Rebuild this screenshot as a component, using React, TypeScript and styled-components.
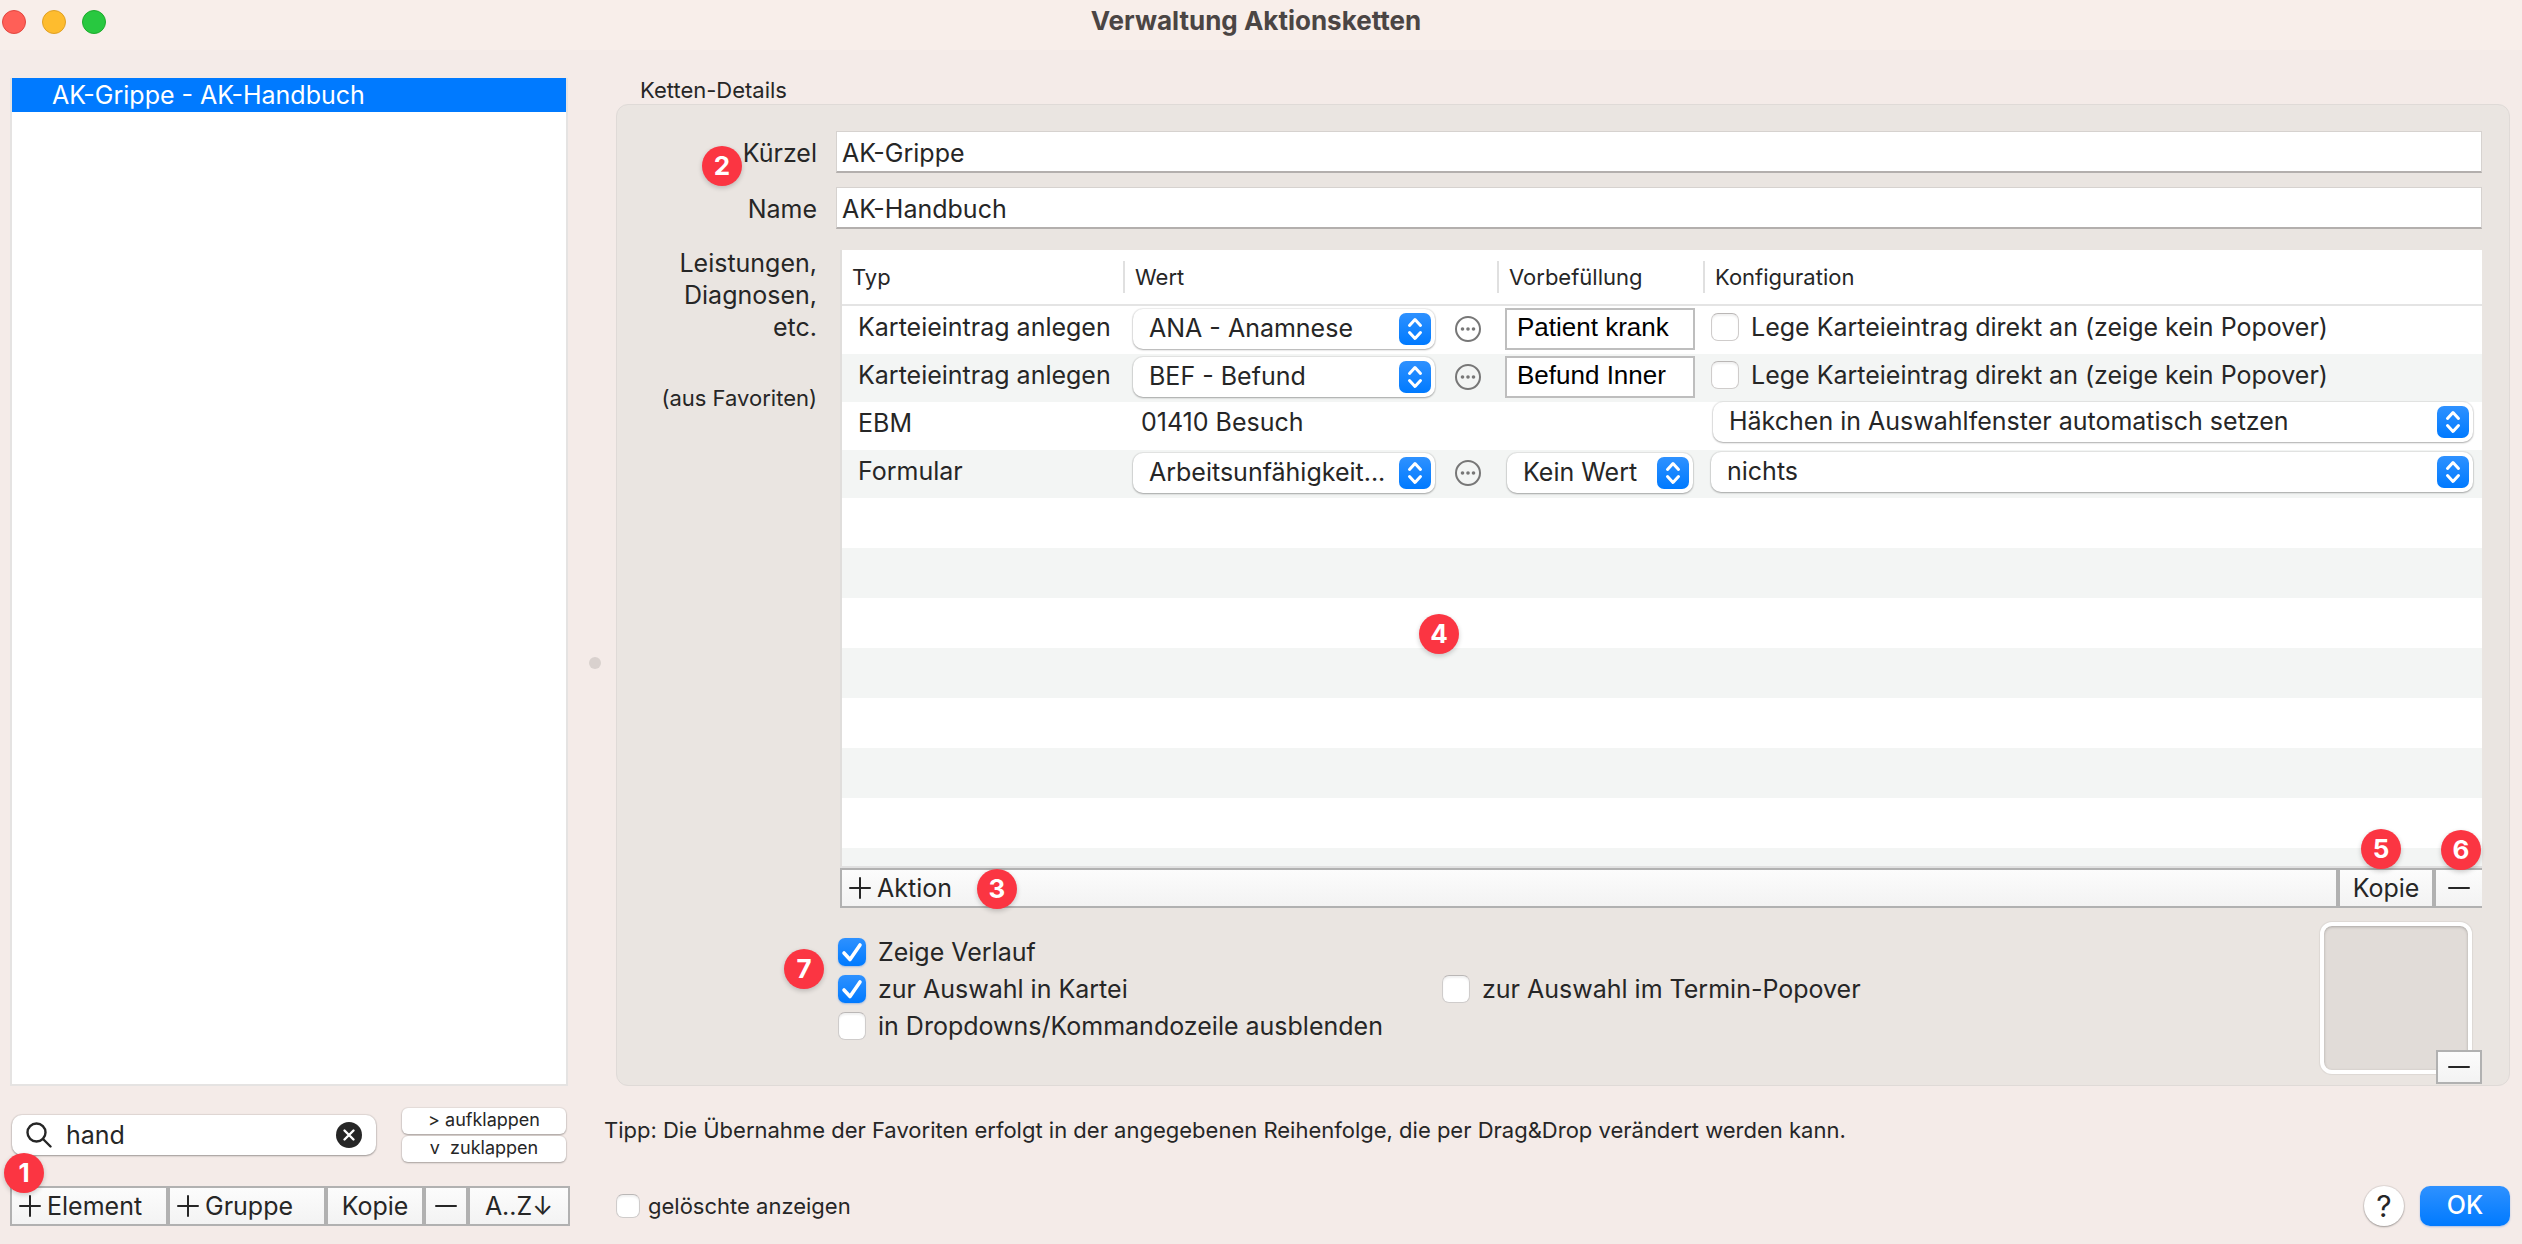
import React from 'react';
import styled, { createGlobalStyle, css } from 'styled-components';

const GlobalStyle = createGlobalStyle`
  *, *::before, *::after { box-sizing: border-box; }
  body { margin: 0; background: #f4ebe8; }
  body, button, input, select {
    font-family: Inter, "Liberation Sans", sans-serif;
    font-size: 25px;
    color: #262626;
  }
`;

const Window = styled.div`
  display: flex;
  flex-direction: column;
  min-height: 100vh;
  background: #f4ebe8;
`;

const TitleBar = styled.header`
  display: grid;
  grid-template-columns: 1fr auto 1fr;
  align-items: center;
  height: 50px;
  padding: 0 12px 6px 2px;
  background: #f8eeea;
`;

const Lights = styled.div`
  display: flex;
  gap: 16px;
`;

const Light = styled.button<{ $fill: string; $edge: string }>`
  width: 24px;
  height: 24px;
  padding: 0;
  border: 1px solid ${(p) => p.$edge};
  border-radius: 50%;
  background: ${(p) => p.$fill};
`;

const Title = styled.h1`
  margin: 0;
  padding-bottom: 2px;
  font-size: 26px;
  font-weight: 700;
  line-height: 32px;
  color: #4b4544;
`;

const Body = styled.div`
  display: flex;
  flex: 1;
  padding: 0 12px 18px 10px;
`;

const Sidebar = styled.aside`
  display: flex;
  flex-direction: column;
  flex: none;
  width: 560px;
  padding-top: 28px;
`;

const ChainList = styled.ul`
  flex: 1;
  margin: 0 2px 0 0;
  padding: 0;
  list-style: none;
  background: #fff;
  border: 2px solid #e5e3e2;
  border-top: 0;
`;

const ChainItem = styled.li`
  height: 34px;
  padding-left: 40px;
  line-height: 34px;
  color: #fff;
  background: #007aff;
`;

const SearchRow = styled.div`
  display: flex;
  justify-content: space-between;
  align-items: center;
  margin: 22px 4px 24px 2px;
`;

const SearchBox = styled.div`
  display: flex;
  align-items: center;
  gap: 14px;
  width: 364px;
  height: 40px;
  padding: 0 14px;
  border-radius: 10px;
  background: #fff;
  box-shadow: 0 0 1px 1px rgba(0, 0, 0, 0.08), 0 1px 2px rgba(0, 0, 0, 0.3);
`;

const SearchInput = styled.input`
  flex: 1;
  min-width: 0;
  height: 32px;
  padding: 0;
  border: 0;
  outline: 0;
  background: none;
`;

const IconButton = styled.button`
  display: flex;
  padding: 0;
  border: 0;
  background: none;
`;

const FoldButtons = styled.div`
  display: flex;
  flex-direction: column;
  gap: 2px;
  width: 164px;
`;

const FoldButton = styled.button`
  height: 26px;
  padding: 0 0 2px;
  border: 0;
  border-radius: 6px;
  background: #fff;
  font-size: 18px;
  line-height: 24px;
  white-space: pre;
  box-shadow: 0 0 1px 1px rgba(0, 0, 0, 0.06), 0 1px 2px rgba(0, 0, 0, 0.28);
`;

const ButtonBar = styled.div`
  position: relative;
  display: flex;
  height: 40px;
`;

const BarButton = styled.button<{ $width?: number; $start?: boolean; $open?: boolean }>`
  display: flex;
  align-items: center;
  justify-content: ${(p) => (p.$start ? 'flex-start' : 'center')};
  gap: 6px;
  ${(p) => (p.$width ? css`flex: 0 0 ${p.$width}px;` : css`flex: 1;`)}
  height: 100%;
  padding: 0 7px;
  border: 2px solid #b1b1b1;
  ${(p) => p.$open && css`border-right: 0;`}
  background: linear-gradient(#fcfcfc, #f3f3f3);
  white-space: nowrap;
`;

const Splitter = styled.div`
  display: flex;
  align-items: center;
  justify-content: center;
  width: 18px;
  margin-left: 16px;
  padding-top: 50px;
`;

const Grip = styled.span`
  width: 12px;
  height: 12px;
  border-radius: 50%;
  background: #d9d1ce;
`;

const Main = styled.main`
  display: flex;
  flex-direction: column;
  flex: 1;
  min-width: 0;
  padding-top: 26px;
`;

const PanelTitle = styled.h2`
  margin: 0;
  padding-left: 36px;
  font-size: 22px;
  font-weight: 400;
  line-height: 28px;
`;

const Panel = styled.section`
  display: grid;
  grid-template-columns: 200px 1fr;
  grid-template-rows: auto auto 1fr;
  column-gap: 19px;
  flex: 1;
  margin-left: 12px;
  padding: 26px 27px 1px 0;
  border: 1px solid #dfdad7;
  border-radius: 12px;
  background: #eae5e1;
`;

const FieldLabel = styled.label`
  position: relative;
  height: 42px;
  padding-top: 1px;
  line-height: 42px;
  text-align: right;
`;

const TextField = styled.input`
  height: 42px;
  margin-bottom: 14px;
  padding: 2px 5px 0;
  border: 1px solid #d6d2cf;
  border-bottom: 2px solid #b3afad;
  outline: 0;
  background: #fff;
`;

const SideNote = styled.div`
  padding-top: 4px;
  line-height: 32px;
  text-align: right;
`;

const SmallNote = styled.p`
  margin: 39px 0 0;
  font-size: 22px;
  line-height: 32px;
`;

const Content = styled.div`
  display: flex;
  flex-direction: column;
  min-width: 0;
  padding: 7px 0 0 4px;
`;

const TableArea = styled.div`
  position: relative;
  display: flex;
  flex-direction: column;
  flex: 1;
  border-left: 2px solid #e0dedc;
  border-bottom: 2px solid #e0e0e0;
  background: #fff;
`;

const Table = styled.table`
  width: 100%;
  table-layout: fixed;
  border-collapse: separate;
  border-spacing: 0;
`;

const HeadCell = styled.th<{ $width?: number }>`
  ${(p) => p.$width && css`width: ${p.$width}px;`}
  height: 56px;
  padding: 0;
  border-bottom: 2px solid #e4e4e4;
  font-size: 22px;
  font-weight: 400;
  text-align: left;
`;

const HeadLabel = styled.span<{ $divided?: boolean }>`
  display: block;
  padding-left: 10px;
  line-height: 32px;
  ${(p) => p.$divided && css`border-left: 2px solid #e0e0e0;`}
`;

const Row = styled.tr`
  &:nth-child(even) { background: #f3f5f4; }
`;

const Cell = styled.td`
  padding: 0;
`;

const CellBox = styled.div<{ $left: number; $lift?: number }>`
  display: flex;
  align-items: center;
  height: 48px;
  padding: 0 9px ${(p) => p.$lift ?? 6}px ${(p) => p.$left}px;
  white-space: nowrap;
`;

const EmptyRows = styled.div`
  flex: 1;
  background: repeating-linear-gradient(#fff 0 50px, #f3f5f4 50px 100px);
`;

const PopupBox = styled.div<{ $width?: number }>`
  position: relative;
  ${(p) => (p.$width ? css`flex: 0 0 ${p.$width}px;` : css`flex: 1;`)}
  height: 40px;
  border-radius: 10px;
  background: #fff;
  box-shadow: 0 0 1px 1px rgba(0, 0, 0, 0.07), 0 1px 2px rgba(0, 0, 0, 0.28);
`;

const PopupSelect = styled.select`
  width: 100%;
  height: 40px;
  padding: 0 38px 2px 16px;
  border: 0;
  outline: 0;
  appearance: none;
  background: none;
`;

const StepperIcon = styled.svg`
  position: absolute;
  top: 4px;
  right: 4px;
  pointer-events: none;
`;

const MoreButton = styled(IconButton)`
  margin-left: 20px;
`;

const PrefillInput = styled.input`
  width: 190px;
  height: 42px;
  padding: 0 10px 4px;
  border: 2px solid #bebebe;
  outline: 0;
  background: #fff;
  font-family: "Liberation Sans", sans-serif;
  font-size: 26px;
  color: #000;
`;

const CheckLabel = styled.label<{ $small?: boolean }>`
  display: inline-flex;
  align-items: center;
  gap: ${(p) => (p.$small ? 8 : 12)}px;
  font-size: ${(p) => (p.$small ? 22 : 25)}px;
  line-height: 28px;
  white-space: nowrap;
`;

const CheckWrap = styled.span<{ $size: number }>`
  position: relative;
  width: ${(p) => p.$size}px;
  height: ${(p) => p.$size}px;
`;

const CheckInput = styled.input`
  display: block;
  width: 100%;
  height: 100%;
  margin: 0;
  appearance: none;
  border: 1px solid #cfcccb;
  border-top-color: #bab7b6;
  border-radius: 7px;
  background: #fff;
  box-shadow: inset 0 2px 2px rgba(0, 0, 0, 0.06);

  &:checked {
    border: 0;
    background: linear-gradient(#2e91ff, #007aff);
    box-shadow: 0 1px 2px rgba(0, 90, 220, 0.3);
  }
`;

const CheckMark = styled.svg`
  position: absolute;
  inset: 0;
  pointer-events: none;
`;

const Options = styled.div`
  position: relative;
  display: flex;
  justify-content: space-between;
  margin-left: -2px;
`;

const OptionGrid = styled.div`
  display: grid;
  grid-template-columns: 604px auto;
  grid-auto-rows: 28px;
  row-gap: 9px;
  padding-top: 30px;
`;

const WideOption = styled.div`
  grid-column: 1 / -1;
`;

const WellFrame = styled.div`
  position: relative;
  width: 162px;
  height: 162px;
  margin-top: 14px;
`;

const ImageWell = styled.div`
  width: 152px;
  height: 152px;
  border: 4px solid #fff;
  border-radius: 12px;
  background: #e1dcd8;
  box-shadow: 0 0 1px 1px rgba(0, 0, 0, 0.06), inset 0 1px 3px rgba(0, 0, 0, 0.25);
`;

const WellRemove = styled(BarButton)`
  position: absolute;
  right: 0;
  bottom: 0;
  width: 46px;
  height: 34px;
  padding: 0;
`;

const Tip = styled.p`
  margin: 30px 0 42px;
  font-size: 22px;
  line-height: 28px;
`;

const Footer = styled.footer`
  display: flex;
  align-items: center;
  justify-content: space-between;
  height: 40px;
  padding-left: 12px;
`;

const FooterActions = styled.div`
  display: flex;
  gap: 16px;
`;

const HelpButton = styled.button`
  width: 40px;
  height: 40px;
  padding: 0;
  border: 0;
  border-radius: 50%;
  background: #fff;
  font-size: 30px;
  line-height: 40px;
  box-shadow: 0 0 1px 1px rgba(0, 0, 0, 0.08), 0 1px 2px rgba(0, 0, 0, 0.3);
`;

const OkButton = styled.button`
  width: 90px;
  height: 40px;
  padding: 0 0 2px;
  border: 0;
  border-radius: 10px;
  background: linear-gradient(#2e91ff, #007aff);
  font-weight: 500;
  color: #fff;
  box-shadow: 0 1px 2px rgba(0, 90, 220, 0.3);
`;

/* Numbered marker that floats over the control it explains. */
const Marker = styled.span<{ $top: number; $left?: number; $right?: number }>`
  position: absolute;
  z-index: 2;
  top: ${(p) => p.$top}px;
  ${(p) => p.$left !== undefined && css`left: ${p.$left}px;`}
  ${(p) => p.$right !== undefined && css`right: ${p.$right}px;`}
  width: 40px;
  height: 40px;
  border-radius: 50%;
  background: #fb3542;
  box-shadow: 0 2px 5px rgba(0, 0, 0, 0.2);
  font-size: 26px;
  font-weight: 700;
  line-height: 40px;
  text-align: center;
  color: #fff;
`;

const PlusIcon = () => (
  <svg width="22" height="22" viewBox="0 0 22 22" stroke="#262626" strokeWidth="2" strokeLinecap="round" aria-hidden="true">
    <path d="M1 11H21M11 1V21" />
  </svg>
);

const MinusIcon = () => (
  <svg width="22" height="22" viewBox="0 0 22 22" stroke="#262626" strokeWidth="2" strokeLinecap="round" aria-hidden="true">
    <path d="M1 11H21" />
  </svg>
);

const MoreIcon = () => (
  <svg width="26" height="26" viewBox="0 0 26 26" aria-hidden="true">
    <circle cx="13" cy="13" r="12" fill="none" stroke="#777" strokeWidth="2" />
    <circle cx="7.5" cy="13" r="1.8" fill="#777" />
    <circle cx="13" cy="13" r="1.8" fill="#777" />
    <circle cx="18.5" cy="13" r="1.8" fill="#777" />
  </svg>
);

const SearchIcon = () => (
  <svg width="26" height="26" viewBox="0 0 26 26" fill="none" stroke="#262626" strokeWidth="2.4" strokeLinecap="round" aria-hidden="true">
    <circle cx="10.5" cy="10.5" r="9" />
    <path d="M17 17L24.5 24.5" />
  </svg>
);

const ClearIcon = () => (
  <svg width="26" height="26" viewBox="0 0 26 26" aria-hidden="true">
    <circle cx="13" cy="13" r="13" fill="#262626" />
    <path d="M8.5 8.5L17.5 17.5M17.5 8.5L8.5 17.5" stroke="#fff" strokeWidth="2.4" strokeLinecap="round" />
  </svg>
);

function Popup({ label, value, width }: { label: string; value: string; width?: number }) {
  return (
    <PopupBox $width={width}>
      <PopupSelect aria-label={label} defaultValue={value}>
        <option>{value}</option>
      </PopupSelect>
      <StepperIcon width="32" height="32" viewBox="0 0 32 32" aria-hidden="true">
        <defs>
          <linearGradient id="stepper" x1="0" y1="0" x2="0" y2="1">
            <stop offset="0" stopColor="#2e91ff" />
            <stop offset="1" stopColor="#007aff" />
          </linearGradient>
        </defs>
        <rect width="32" height="32" rx="7" fill="url(#stepper)" />
        <path
          d="M10.5 12.5L16 6.5L21.5 12.5M10.5 19.5L16 25.5L21.5 19.5"
          fill="none"
          stroke="#fff"
          strokeWidth="3"
          strokeLinecap="round"
          strokeLinejoin="round"
        />
      </StepperIcon>
    </PopupBox>
  );
}

function Check({ text, checked, small }: { text: string; checked?: boolean; small?: boolean }) {
  return (
    <CheckLabel $small={small}>
      <CheckWrap $size={small ? 24 : 28}>
        <CheckInput type="checkbox" defaultChecked={checked} />
        {checked && (
          <CheckMark width="28" height="28" viewBox="0 0 28 28" aria-hidden="true">
            <path d="M6 15L12 21.5L22 7" fill="none" stroke="#fff" strokeWidth="3.6" strokeLinecap="round" strokeLinejoin="round" />
          </CheckMark>
        )}
      </CheckWrap>
      {text}
    </CheckLabel>
  );
}

const entryRows = [
  { value: 'ANA - Anamnese', prefill: 'Patient krank' },
  { value: 'BEF - Befund', prefill: 'Befund Inner' },
];

export default function App() {
  return (
    <Window>
      <GlobalStyle />
      <TitleBar>
        <Lights>
          <Light $fill="#ff5f57" $edge="#e2463f" aria-label="Schließen" />
          <Light $fill="#febc2e" $edge="#e0a024" aria-label="Minimieren" />
          <Light $fill="#28c840" $edge="#1dab2c" aria-label="Zoomen" />
        </Lights>
        <Title>Verwaltung Aktionsketten</Title>
      </TitleBar>

      <Body>
        <Sidebar>
          <ChainList>
            <ChainItem>AK-Grippe - AK-Handbuch</ChainItem>
          </ChainList>
          <SearchRow>
            <SearchBox>
              <SearchIcon />
              <SearchInput aria-label="Suchen" defaultValue="hand" />
              <IconButton aria-label="Suche löschen">
                <ClearIcon />
              </IconButton>
            </SearchBox>
            <FoldButtons>
              <FoldButton>{'> aufklappen'}</FoldButton>
              <FoldButton>{'v  zuklappen'}</FoldButton>
            </FoldButtons>
          </SearchRow>
          <ButtonBar>
            <Marker $top={-33} $left={-6}>1</Marker>
            <BarButton $width={158} $start><PlusIcon />Element</BarButton>
            <BarButton $width={158} $start><PlusIcon />Gruppe</BarButton>
            <BarButton $width={98}>Kopie</BarButton>
            <BarButton $width={44} aria-label="Entfernen"><MinusIcon /></BarButton>
            <BarButton>A..Z↓</BarButton>
          </ButtonBar>
        </Sidebar>

        <Splitter>
          <Grip />
        </Splitter>

        <Main>
          <PanelTitle>Ketten-Details</PanelTitle>
          <Panel>
            <FieldLabel htmlFor="kuerzel">
              <Marker $top={15} $left={85}>2</Marker>
              Kürzel
            </FieldLabel>
            <TextField id="kuerzel" defaultValue="AK-Grippe" />
            <FieldLabel htmlFor="name">Name</FieldLabel>
            <TextField id="name" defaultValue="AK-Handbuch" />

            <SideNote>
              Leistungen,
              <br />
              Diagnosen,
              <br />
              etc.
              <SmallNote>(aus Favoriten)</SmallNote>
            </SideNote>

            <Content>
              <TableArea>
                <Table>
                  <thead>
                    <tr>
                      <HeadCell $width={281}><HeadLabel>Typ</HeadLabel></HeadCell>
                      <HeadCell $width={374}><HeadLabel $divided>Wert</HeadLabel></HeadCell>
                      <HeadCell $width={206}><HeadLabel $divided>Vorbefüllung</HeadLabel></HeadCell>
                      <HeadCell><HeadLabel $divided>Konfiguration</HeadLabel></HeadCell>
                    </tr>
                  </thead>
                  <tbody>
                    {entryRows.map((row) => (
                      <Row key={row.value}>
                        <Cell><CellBox $left={16}>Karteieintrag anlegen</CellBox></Cell>
                        <Cell>
                          <CellBox $left={10} $lift={2}>
                            <Popup label="Wert" value={row.value} width={302} />
                            <MoreButton aria-label="Mehr"><MoreIcon /></MoreButton>
                          </CellBox>
                        </Cell>
                        <Cell>
                          <CellBox $left={8} $lift={2}>
                            <PrefillInput aria-label="Vorbefüllung" defaultValue={row.prefill} />
                          </CellBox>
                        </Cell>
                        <Cell>
                          <CellBox $left={8}>
                            <Check text="Lege Karteieintrag direkt an (zeige kein Popover)" />
                          </CellBox>
                        </Cell>
                      </Row>
                    ))}
                    <Row>
                      <Cell><CellBox $left={16}>EBM</CellBox></Cell>
                      <Cell><CellBox $left={18} $lift={8}>01410 Besuch</CellBox></Cell>
                      <Cell />
                      <Cell>
                        <CellBox $left={10} $lift={8}>
                          <Popup label="Konfiguration" value="Häkchen in Auswahlfenster automatisch setzen" />
                        </CellBox>
                      </Cell>
                    </Row>
                    <Row>
                      <Cell><CellBox $left={16}>Formular</CellBox></Cell>
                      <Cell>
                        <CellBox $left={10} $lift={2}>
                          <Popup label="Wert" value="Arbeitsunfähigkeit..." width={302} />
                          <MoreButton aria-label="Mehr"><MoreIcon /></MoreButton>
                        </CellBox>
                      </Cell>
                      <Cell>
                        <CellBox $left={10} $lift={2}>
                          <Popup label="Vorbefüllung" value="Kein Wert" width={186} />
                        </CellBox>
                      </Cell>
                      <Cell>
                        <CellBox $left={8} $lift={4}>
                          <Popup label="Konfiguration" value="nichts" />
                        </CellBox>
                      </Cell>
                    </Row>
                  </tbody>
                </Table>
                <EmptyRows />
                <Marker $top={364} $left={577}>4</Marker>
              </TableArea>
              <ButtonBar>
                <BarButton $start><PlusIcon />Aktion</BarButton>
                <BarButton $width={96}>Kopie</BarButton>
                <BarButton $width={48} $open aria-label="Aktion entfernen"><MinusIcon /></BarButton>
                <Marker $top={1} $left={137}>3</Marker>
                <Marker $top={-39} $right={81}>5</Marker>
                <Marker $top={-38} $right={1}>6</Marker>
              </ButtonBar>
              <Options>
                <Marker $top={41} $left={-54}>7</Marker>
                <OptionGrid>
                  <WideOption><Check text="Zeige Verlauf" checked /></WideOption>
                  <Check text="zur Auswahl in Kartei" checked />
                  <Check text="zur Auswahl im Termin-Popover" />
                  <WideOption><Check text="in Dropdowns/Kommandozeile ausblenden" /></WideOption>
                </OptionGrid>
                <WellFrame>
                  <ImageWell />
                  <WellRemove aria-label="Bild entfernen"><MinusIcon /></WellRemove>
                </WellFrame>
              </Options>
            </Content>
          </Panel>

          <Tip>
            Tipp: Die Übernahme der Favoriten erfolgt in der angegebenen Reihenfolge, die per Drag&amp;Drop verändert werden kann.
          </Tip>
          <Footer>
            <Check text="gelöschte anzeigen" small />
            <FooterActions>
              <HelpButton aria-label="Hilfe">?</HelpButton>
              <OkButton>OK</OkButton>
            </FooterActions>
          </Footer>
        </Main>
      </Body>
    </Window>
  );
}
